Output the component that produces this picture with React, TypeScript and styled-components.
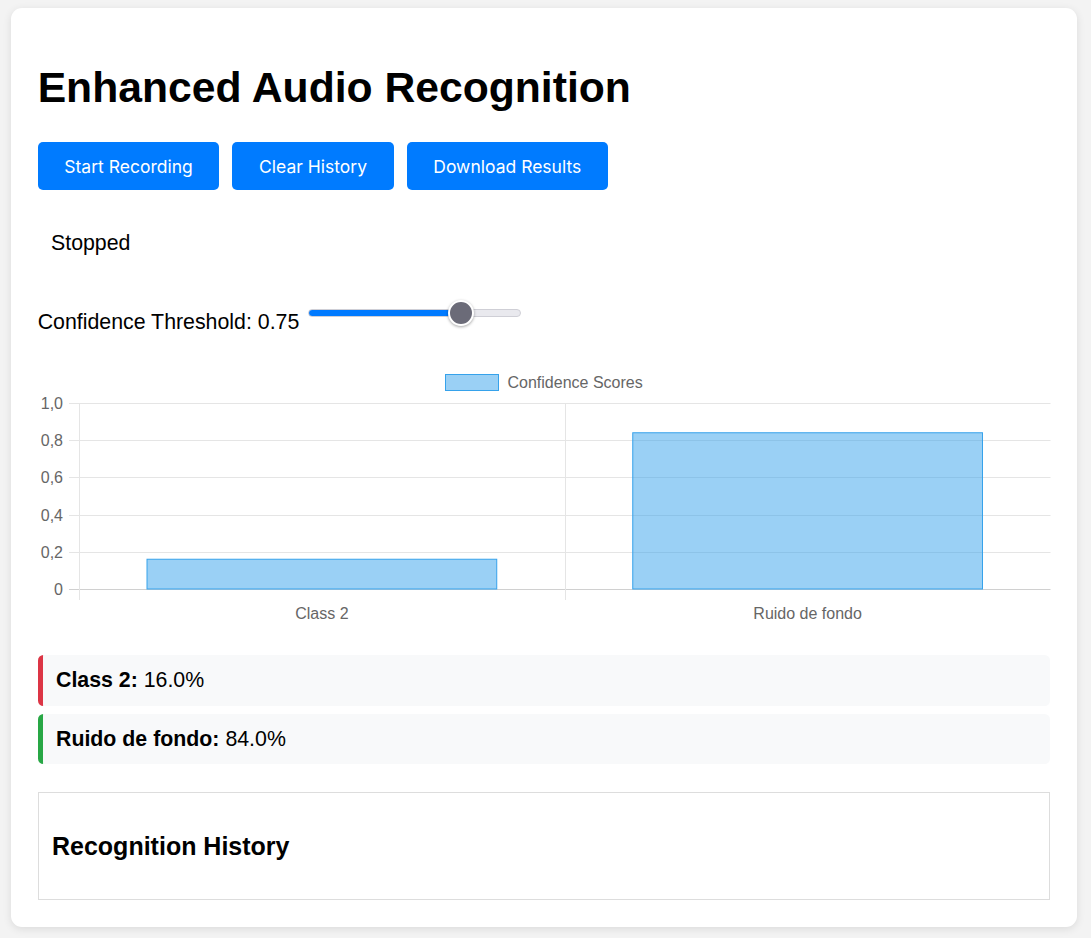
import React, { useState } from "react";
import styled, { createGlobalStyle } from "styled-components";

const GlobalStyle = createGlobalStyle`
  html, body { margin: 0; padding: 0; }
  body {
    background: #f3f3f3;
    font-family: "Liberation Sans", Arial, Helvetica, sans-serif;
    color: #000;
    padding: 8px 14px 12px 11px;
  }
  * { box-sizing: border-box; }
`;

const Card = styled.main`
  background: #fff;
  border-radius: 11px;
  box-shadow: 0 2px 8px rgba(0, 0, 0, 0.1);
  padding: 26.67px;
  display: flex;
  flex-direction: column;
`;

const Title = styled.h1`
  font-size: 42.67px;
  font-weight: 700;
  line-height: 49px;
  margin: 28.6px 0 30px;
`;

const Toolbar = styled.div`
  display: flex;
  gap: 13px;
`;

const Button = styled.button`
  height: 48px;
  padding: 0 26.67px;
  background: #007bff;
  color: #fff;
  border: none;
  border-radius: 5px;
  font-family: Inter, "Liberation Sans", sans-serif;
  font-size: 17.5px;
  font-weight: 400;
  cursor: pointer;
`;

const Status = styled.div`
  margin-top: 27.5px;
  padding: 13.33px;
  font-size: 21.33px;
  line-height: 24.5px;
`;

const SliderRow = styled.div`
  display: flex;
  align-items: flex-end;
  gap: 9px;
  margin-top: 32px;
`;

const Label = styled.label`
  font-size: 21.33px;
  line-height: 24.5px;
`;

const Range = styled.input`
  -webkit-appearance: none;
  appearance: none;
  width: 213px;
  height: 24px;
  margin: 0 0 9.5px 0;
  background: transparent;
  &::-webkit-slider-runnable-track {
    height: 8px;
    border-radius: 4px;
    border: 1px solid #cfcfd6;
    background: linear-gradient(
      to right,
      #007aff 0,
      #007aff var(--fill),
      #e9e9ee var(--fill),
      #e9e9ee 100%
    );
  }
  &::-webkit-slider-thumb {
    -webkit-appearance: none;
    width: 26px;
    height: 26px;
    margin-top: -10px;
    border-radius: 50%;
    background: #6b6b78;
    border: 2px solid #fff;
    box-shadow: 0 1px 3px rgba(0, 0, 0, 0.35);
  }
`;

const ChartBox = styled.div`
  margin-top: 27.5px;
  height: 262px;
`;

const Results = styled.div`
  margin-top: 31px;
  display: flex;
  flex-direction: column;
  gap: 8px;
`;

const ResultItem = styled.div<{ $accent: string }>`
  background: #f8f9fa;
  border-left: 5.33px solid ${(p) => p.$accent};
  border-radius: 5.33px;
  padding: 13.33px;
  font-size: 21.33px;
  line-height: 24px;
`;

const History = styled.section`
  margin-top: 28px;
  border: 1px solid #ddd;
  padding: 13.33px;
`;

const HistoryTitle = styled.h3`
  margin: 25px 0;
  font-size: 25px;
  line-height: 29px;
  font-weight: 700;
`;

const data = [
  { label: "Class 2", value: 0.16 },
  { label: "Ruido de fondo", value: 0.84 },
];

const Chart: React.FC = () => {
  const W = 1013;
  const left = 41;
  const right = 1012.5;
  const top = 41;
  const bottom = 227;
  const h = bottom - top;
  const catW = (right - left) / data.length;
  const barW = catW * 0.72;
  const ticks = [1, 0.8, 0.6, 0.4, 0.2, 0];
  const grid = "#e5e5e5";
  const font = "'Liberation Sans', Arial, sans-serif";
  return (
    <svg width={W} height={262} viewBox={`0 0 ${W} 262`}>
      <rect x={407.5} y={12.5} width={53} height={16} fill="rgba(54,162,235,0.5)" stroke="rgb(54,162,235)" strokeWidth={1} />
      <text x={469.5} y={26} fontSize={16} fill="#666" fontFamily={font}>Confidence Scores</text>
      {ticks.map((t) => {
        const y = Math.round(bottom - t * h) + 0.5;
        return (
          <g key={t}>
            <line x1={left - 10} x2={right} y1={y} y2={y} stroke={t === 0 ? "#d0d0d0" : grid} strokeWidth={1} />
            <text x={25} y={y + 5.5} fontSize={16} fill="#666" textAnchor="end" fontFamily={font}>
              {t === 0 ? "0" : t.toFixed(1).replace(".", ",")}
            </text>
          </g>
        );
      })}
      {[left, left + catW, right].map((x, i) => (
        <line key={i} x1={Math.round(x) + 0.5} x2={Math.round(x) + 0.5} y1={top} y2={238} stroke={grid} strokeWidth={1} />
      ))}
      {data.map((d, i) => {
        const cx = left + catW * (i + 0.5);
        const y = bottom - d.value * h;
        return (
          <g key={d.label}>
            <rect x={cx - barW / 2} y={y} width={barW} height={bottom - y} fill="rgba(54,162,235,0.5)" stroke="rgb(54,162,235)" strokeWidth={1} />
            <text x={cx} y={257} fontSize={16} fill="#666" textAnchor="middle" fontFamily={font}>{d.label}</text>
          </g>
        );
      })}
    </svg>
  );
};

export default function App() {
  const [threshold, setThreshold] = useState(0.75);
  const pct = threshold * 100;
  return (
    <>
      <GlobalStyle />
      <Card>
        <Title>Enhanced Audio Recognition</Title>
        <Toolbar>
          <Button>Start Recording</Button>
          <Button>Clear History</Button>
          <Button>Download Results</Button>
        </Toolbar>
        <Status>Stopped</Status>
        <SliderRow>
          <Label htmlFor="thr">Confidence Threshold: {threshold.toFixed(2)}</Label>
          <Range
            id="thr"
            type="range"
            min={0}
            max={1}
            step={0.01}
            value={threshold}
            onChange={(e) => setThreshold(parseFloat(e.target.value))}
            style={{ ["--fill" as string]: `${pct}%` } as React.CSSProperties}
          />
        </SliderRow>
        <ChartBox>
          <Chart />
        </ChartBox>
        <Results>
          <ResultItem $accent="#dc3545">
            <strong>Class 2:</strong> 16.0%
          </ResultItem>
          <ResultItem $accent="#28a745">
            <strong>Ruido de fondo:</strong> 84.0%
          </ResultItem>
        </Results>
        <History>
          <HistoryTitle>Recognition History</HistoryTitle>
        </History>
      </Card>
    </>
  );
}
